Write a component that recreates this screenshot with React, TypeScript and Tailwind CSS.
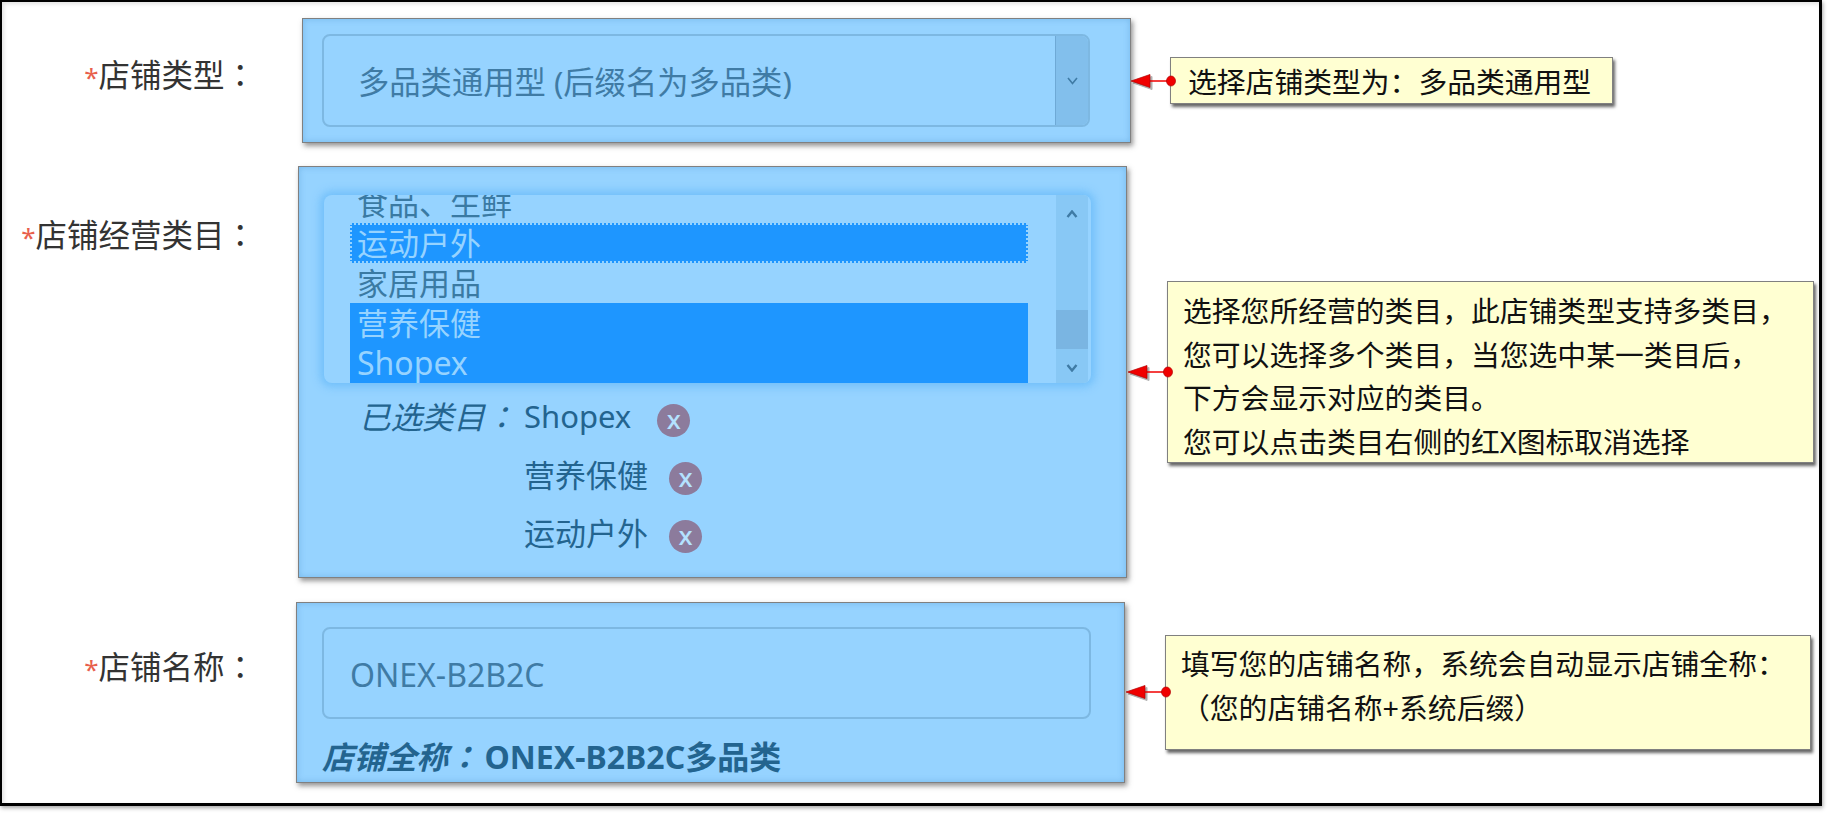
const font = "font-['Noto_Sans','Noto_Sans_CJK_SC',sans-serif]";

function Colon() {
  return <span className="font-['Noto_Sans_CJK_TC',sans-serif]">：</span>;
}

function Connector({ width }: { width: number }) {
  return (
    <svg
      className="absolute top-1/2 -translate-y-1/2 overflow-visible"
      style={{ left: -width, width: width + 6, height: 16 }}
      viewBox={`0 0 ${width + 6} 16`}
    >
      <g transform="translate(2,2)" fill="#666" stroke="#666" opacity="0.5">
        <polygon points={`0,8 19,1.5 19,14.5`} />
      </g>
      <line x1="16" y1="8" x2={width} y2="8" stroke="#f00000" strokeWidth="1.5" />
      <polygon points="0,8 19,1.5 19,14.5" fill="#f00000" stroke="#b00000" strokeWidth="0.7" />
      <ellipse cx={width} cy="8" rx="4.5" ry="5" fill="#f00000" stroke="#b00000" strokeWidth="0.7" />
    </svg>
  );
}

function Callout({
  className,
  lines,
  arrow,
  arrowY,
}: {
  className: string;
  lines: string[];
  arrow: number;
  arrowY: string;
}) {
  return (
    <div
      className={`relative shrink-0 border border-[#808080] bg-[#ffffd2] text-[#111] text-[28.8px] leading-[43.5px] shadow-[2px_3px_3px_#666] ${className}`}
    >
      <div className={`absolute left-0 ${arrowY}`}>
        <Connector width={arrow} />
      </div>
      {lines.map((l) => (
        <div key={l} className="whitespace-nowrap">
          {l}
        </div>
      ))}
    </div>
  );
}

function Label({ text, pt }: { text: string; pt: string }) {
  return (
    <div className={`w-[254px] shrink-0 text-right text-[31.5px] leading-[40px] text-[#333] whitespace-nowrap ${pt}`}>
      <span className="text-[26px] text-[#e8604c]">*</span>
      {text}
      <Colon />
    </div>
  );
}

function Panel({ className, children }: { className: string; children: React.ReactNode }) {
  return (
    <div
      className={`shrink-0 border border-[#808080] bg-[#96d3ff] shadow-[2px_3px_5px_rgba(90,90,90,0.65),inset_0_0_6px_rgba(80,150,210,0.45)] ${className}`}
    >
      {children}
    </div>
  );
}

function Chevron({ up, className, sw = 1.6 }: { up?: boolean; className: string; sw?: number }) {
  return (
    <svg viewBox="0 0 12 8" className={className} fill="none" stroke="currentColor" strokeWidth={sw}>
      <path d={up ? "M1.5 7 6 1.5 10.5 7" : "M1.5 1 6 6.5 10.5 1"} />
    </svg>
  );
}

function Chosen({ name, gap, lift }: { name: string; gap: string; lift: string }) {
  return (
    <div className={`flex items-center h-[33px] ${gap}`}>
      <span className={`text-[31px] leading-[33px] whitespace-nowrap ${lift}`}>{name}</span>
      <span className="flex h-[33px] w-[33px] items-center justify-center rounded-full bg-[#8c7b9c] text-[26px] font-medium leading-[26px] pb-[3px] text-[#b4e2ff]">
        x
      </span>
    </div>
  );
}

export default function App() {
  return (
    <div className={`h-[816px] w-[1831px] overflow-hidden bg-white ${font}`}>
      <div className="h-[806px] w-[1822px] border-2 border-t-[2px] border-b-[3px] border-r-[3px] border-black shadow-[1px_2px_4px_rgba(0,0,0,0.35),inset_2px_2px_4px_rgba(0,0,0,0.12)]">
        {/* Row 1 */}
        <div className="flex pt-[16px]">
          <Label text="店铺类型" pt="pt-[35px]" />
          <Panel className="ml-[46px] h-[125px] w-[829px] pl-[19px] pt-[15px]">
            <div className="flex h-[93px] w-[768px] overflow-hidden rounded-[8px] border-2 border-[#7db8e2]">
              <div className="flex-1 pl-[34px] pt-[24px] text-[31.3px] leading-[44px] text-[#3f7ba5] whitespace-nowrap">
                多品类通用型 (后缀名为多品类)
              </div>
              <div className="flex w-[33px] items-center justify-center border-l border-[#6ea9d6] bg-[#82bfec] text-[#3f7ba5]">
                <Chevron className="h-[8px] w-[13px]" />
              </div>
            </div>
          </Panel>
          <Callout
            className="ml-[39px] mt-[39px] h-[47px] w-[443px] pl-[17px] pt-[2px]"
            lines={["选择店铺类型为：多品类通用型"]}
            arrow={40}
            arrowY="top-[23px]"
          />
        </div>

        {/* Row 2 */}
        <div className="mt-[23px] flex">
          <Label text="店铺经营类目" pt="pt-[47px]" />
          <Panel className="ml-[42px] h-[412px] w-[829px] pl-[25px] pt-[28px]">
            <div className="flex h-[188px] w-[767px] overflow-hidden rounded-[8px] bg-[#96d3ff] shadow-[0_0_9px_4px_rgba(110,190,250,0.9)]">
              <div className="ml-[26px] w-[678px] text-[31px] leading-[40px] text-[#3a7aa3]">
                <div className="-mt-[12px] h-[40px] pl-[7px]">食品、生鲜</div>
                <div className="h-[40px] border-2 border-dotted border-[#96d3ff] bg-[#1e96ff] pl-[5px] leading-[36px] text-[#96d3ff]">
                  运动户外
                </div>
                <div className="h-[40px] pl-[7px]">家居用品</div>
                <div className="h-[40px] bg-[#1e96ff] pl-[7px] text-[#96d3ff]">营养保健</div>
                <div className="h-[40px] bg-[#1e96ff] pl-[7px] text-[#96d3ff] text-[32px]">Shopex</div>
              </div>
              <div className="ml-[28px] flex w-[32px] flex-col items-center bg-[#88c8f5] text-[#3f7ba5]">
                <Chevron up sw={2.4} className="mt-[15px] h-[8px] w-[12px]" />
                <div className="mt-[92px] h-[39px] w-full bg-[#7ab5e2]" />
                <Chevron sw={2.4} className="mt-[15px] h-[8px] w-[12px]" />
              </div>
            </div>
            <div className="mt-[21px] flex pl-[35px] text-[#23648f]">
              <div className="w-[165px] shrink-0 whitespace-nowrap text-[31.5px] leading-[33px] -mt-[5px] italic">
                已选类目
                <Colon />
              </div>
              <div className="flex flex-col gap-[25px]">
                <Chosen name="Shopex" gap="gap-[26px]" lift="-mt-[8px]" />
                <Chosen name="营养保健" gap="gap-[21px]" lift="-mt-[7px]" />
                <Chosen name="运动户外" gap="gap-[21px]" lift="-mt-[6px]" />
              </div>
            </div>
          </Panel>
          <Callout
            className="ml-[40px] mt-[115px] h-[182px] w-[647px] pl-[15px] pt-[7px]"
            lines={[
              "选择您所经营的类目，此店铺类型支持多类目，",
              "您可以选择多个类目，当您选中某一类目后，",
              "下方会显示对应的类目。",
              "您可以点击类目右侧的红X图标取消选择",
            ]}
            arrow={40}
            arrowY="top-[90px]"
          />
        </div>

        {/* Row 3 */}
        <div className="mt-[24px] flex">
          <Label text="店铺名称" pt="pt-[43px]" />
          <Panel className="ml-[40px] h-[181px] w-[829px] pl-[25px] pt-[24px]">
            <div className="h-[92px] w-[769px] rounded-[8px] border-2 border-[#7db8e2] pl-[26px] pt-[24px] text-[32px] leading-[44px] text-[#3f7ba5]">
              ONEX-B2B2C
            </div>
            <div className="mt-[15px] whitespace-nowrap text-[31.5px] leading-[42px] font-bold text-[#23648f]">
              <span className="italic">
                店铺全称
                <Colon />
              </span>
              <span className="ml-[5px] text-[32px]">ONEX-B2B2C多品类</span>
            </div>
          </Panel>
          <Callout
            className="ml-[40px] mt-[33px] h-[115px] w-[646px] pl-[15px] pt-[6px]"
            lines={["填写您的店铺名称，系统会自动显示店铺全称：", "（您的店铺名称+系统后缀）"]}
            arrow={40}
            arrowY="top-[56px]"
          />
        </div>
      </div>
    </div>
  );
}
